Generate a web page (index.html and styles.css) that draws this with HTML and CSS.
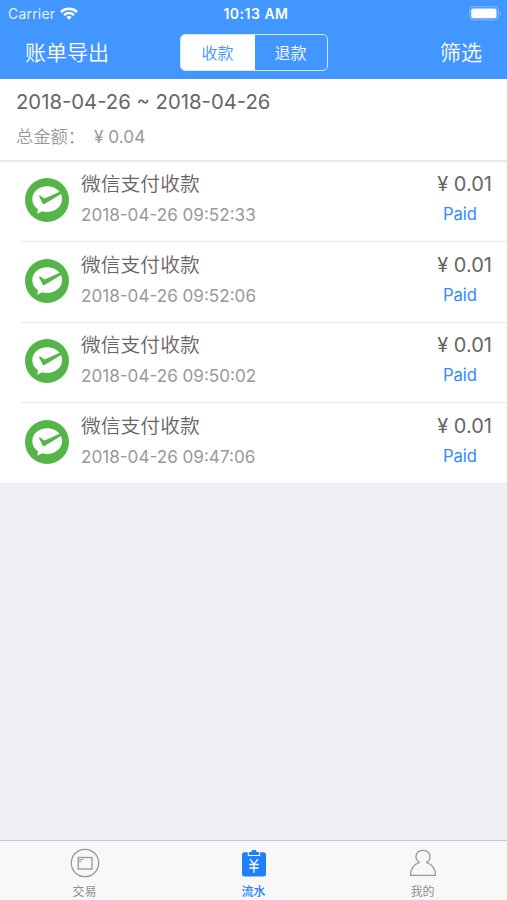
FILE: index.html
```html
<!DOCTYPE html>
<html lang="zh-CN">
<head>
    <meta charset="UTF-8">
    <meta name="viewport" content="width=device-width, initial-scale=1.0">
    <title>流水</title>
    <link rel="stylesheet" href="styles.css">
</head>
<body>
    <svg width="0" height="0" class="icon-defs">
        <!-- 微信支付图标 -->
        <symbol id="wechat-pay" viewBox="0 0 44 44">
            <circle cx="22" cy="22" r="22" fill="#55b548"/>
            <path d="M22 8.300C13.800 8.300 7.300 13.800 7.300 21.300C7.300 25.500 9.500 28.900 13 31.200L12.300 35.700L17.200 33.300C18.700 33.800 20.300 34 22 34C30.300 34 37 28.600 37 21.300C37 19.300 36.700 17.600 36 16L19.500 26C18.600 26.500 18 26.300 17.600 25.500L14.200 18.500C13.900 17.700 14.600 17.200 15.300 17.600L18.600 19.900C19.300 20.300 20 20.300 20.700 20L34.600 13.700C31.700 10.500 27.200 8.300 22 8.300Z" fill="#fff"/>
        </symbol>
    </svg>

    <header class="header">
        <div class="status-bar">
            <div class="carrier">
                <span>Carrier</span>
                <svg class="wifi" width="18" height="13" viewBox="0 0 18 13" fill="none" stroke="#fff" stroke-width="2.500">
                    <path d="M1 5C5.400 .8 12.600 .8 17 5"/>
                    <path d="M4 8.100C6.800 5.400 11.200 5.400 14 8.100"/>
                    <path d="M6.300 10C7.900 8.500 10.100 8.500 11.700 10L9 12.700Z" fill="#fff" stroke="none"/>
                </svg>
            </div>
            <span class="time">10:13 AM</span>
            <div class="battery-box">
                <svg width="33" height="15" viewBox="0 0 33 15">
                    <rect x=".7" y=".7" width="28.600" height="13.200" rx="3.500" fill="none" stroke="#84bbff" stroke-width="1"/>
                    <rect x="2.200" y="2.400" width="25.300" height="9.800" rx="2" fill="#fff"/>
                    <path d="M30.800 5.200Q33 7.200 30.800 9.300Z" fill="#84bbff"/>
                </svg>
            </div>
        </div>
        <nav class="nav-bar">
            <span class="nav-btn">账单导出</span>
            <div class="segment">
                <span class="segment-item active">收款</span>
                <span class="segment-item">退款</span>
            </div>
            <span class="nav-btn right">筛选</span>
        </nav>
    </header>

    <section class="summary">
        <div class="range">2018-04-26 ~ 2018-04-26</div>
        <div class="total"><span class="total-label">总金额：</span><span>¥ 0.04</span></div>
    </section>

    <main class="list">
        <div class="item">
            <svg class="item-icon"><use href="#wechat-pay"/></svg>
            <div class="item-body">
                <div class="item-title">微信支付收款</div>
                <div class="item-time">2018-04-26 09:52:33</div>
            </div>
            <div class="item-side">
                <div class="item-amount">¥ 0.01</div>
                <div class="item-status">Paid</div>
            </div>
        </div>
        <div class="item">
            <svg class="item-icon"><use href="#wechat-pay"/></svg>
            <div class="item-body">
                <div class="item-title">微信支付收款</div>
                <div class="item-time">2018-04-26 09:52:06</div>
            </div>
            <div class="item-side">
                <div class="item-amount">¥ 0.01</div>
                <div class="item-status">Paid</div>
            </div>
        </div>
        <div class="item">
            <svg class="item-icon"><use href="#wechat-pay"/></svg>
            <div class="item-body">
                <div class="item-title">微信支付收款</div>
                <div class="item-time">2018-04-26 09:50:02</div>
            </div>
            <div class="item-side">
                <div class="item-amount">¥ 0.01</div>
                <div class="item-status">Paid</div>
            </div>
        </div>
        <div class="item">
            <svg class="item-icon"><use href="#wechat-pay"/></svg>
            <div class="item-body">
                <div class="item-title">微信支付收款</div>
                <div class="item-time">2018-04-26 09:47:06</div>
            </div>
            <div class="item-side">
                <div class="item-amount">¥ 0.01</div>
                <div class="item-status">Paid</div>
            </div>
        </div>
    </main>

    <footer class="tab-bar">
        <div class="tab">
            <svg width="30" height="30" viewBox="0 0 30 30" fill="none" stroke="#999" stroke-width="1.300">
                <circle cx="15" cy="15" r="13.700"/>
                <rect x="8.200" y="9.500" width="13.800" height="11.500"/>
                <path d="M8.500 11.700H13.500M8.500 13.800H11.500" stroke-width="1"/>
            </svg>
            <span>交易</span>
        </div>
        <div class="tab active">
            <svg width="30" height="30" viewBox="0 0 30 30">
                <path d="M5.500 4.200H8.800V7.900H21.200V4.200H24.500Q27 4.200 27 6.700V26Q27 28.500 24.500 28.500H5.500Q3 28.500 3 26V6.700Q3 4.200 5.500 4.200Z" fill="#2080fc"/>
                <path d="M9.800 6.900V5Q9.800 4 10.800 4H12.200Q12.500 1.700 15 1.700T17.800 4H19.200Q20.200 4 20.200 5V6.900Z" fill="#2080fc"/>
                <path d="M11 11.200L15 16.200L19 11.200M15 16.200V24.800M10.300 16.500H19.700M10.300 20H19.700" fill="none" stroke="#fff" stroke-width="1.300"/>
            </svg>
            <span>流水</span>
        </div>
        <div class="tab">
            <svg width="30" height="30" viewBox="0 0 30 30" fill="none" stroke="#999" stroke-width="1.300" stroke-linejoin="round">
                <path d="M11.500 14.500C9.100 13 8 11 8 8.700C8 4.900 11 2.300 15 2.300S22 4.900 22 8.700C22 11 20.900 13 18.500 14.500C23.500 16 27.300 20.500 27.500 27.300H2.500C2.700 20.500 6.500 16 11.500 14.500Z"/>
            </svg>
            <span>我的</span>
        </div>
    </footer>
</body>
</html>
```
FILE: styles.css
```css
* {
    box-sizing: border-box;
}

body {
    margin: 0;
    height: 100vh;
    display: flex;
    flex-direction: column;
    overflow: hidden;
    background: #eeeef3;
    color: #666;
    font-family: Inter, "Noto Sans CJK SC", sans-serif;
}

.icon-defs {
    position: absolute;
}

/* 顶部 */
.header {
    height: 79px;
    background: #4296ff;
    color: #fff;
}

.status-bar {
    display: grid;
    grid-template-columns: 1fr auto 1fr;
    align-items: center;
    height: 27px;
    padding: 0 5px 0 10px;
    font-size: 14px;
}

.carrier {
    display: flex;
    align-items: center;
    gap: 5px;
    margin-left: -2px;
    color: #e6f1ff;
    letter-spacing: 0.2px;
}

.time {
    font-weight: 600;
    letter-spacing: 0.5px;
}

.battery-box {
    display: flex;
    justify-content: flex-end;
}

.nav-bar {
    display: grid;
    grid-template-columns: 1fr 148px 1fr;
    align-items: center;
    height: 50px;
    padding: 0 25px;
    font-size: 21px;
    font-weight: 350;
}

.nav-btn {
    margin-top: -2px;
}

.right {
    text-align: right;
}

.segment {
    display: flex;
    height: 37px;
    border: 1.500px solid #d5e7ff;
    border-radius: 5px;
    overflow: hidden;
    font-size: 16px;
}

.segment-item {
    flex: 1;
    line-height: 36px;
    text-align: center;
}

.segment-item.active {
    flex: 0 0 74px;
    background: #fff;
    color: #4296ff;
}

/* 汇总 */
.summary {
    height: 82.500px;
    padding: 8px 16px 0;
    background: #fff;
    border-bottom: 2px solid #e9e9eb;
}

.range {
    font-size: 20.300px;
    line-height: 30px;
}

.total {
    display: flex;
    margin-top: 5px;
    color: #999;
    font-size: 17.300px;
    line-height: 30px;
}

.total-label {
    width: 78px;
    font-weight: 350;
}

/* 流水列表 */
.list {
    background: #fff;
}

.item {
    display: flex;
    height: 80.500px;
    margin-left: 20px;
    padding: 7.500px 15px 0 5px;
    border-bottom: 1.500px solid #ececee;
}

.item:last-child {
    margin-left: 0;
    padding-left: 25px;
}

.item-icon {
    width: 44px;
    height: 44px;
    margin-top: 9px;
}

.item-body {
    flex: 1;
    margin-left: 12px;
}

.item-title {
    font-size: 19.800px;
    font-weight: 350;
    line-height: 31px;
}

.item-time {
    color: #999;
    font-size: 17.100px;
    line-height: 29px;
}

.item-side {
    text-align: right;
}

.item-amount {
    font-size: 20px;
    line-height: 31px;
}

.item-status {
    padding-right: 15px;
    color: #2c8cff;
    font-size: 16.600px;
    line-height: 29px;
}

/* 底部标签栏 */
.tab-bar {
    display: flex;
    height: 60px;
    margin-top: auto;
    background: #f8f8f9;
    border-top: 1px solid #c8c8cc;
}

.tab {
    flex: 1;
    display: flex;
    flex-direction: column;
    align-items: center;
    padding-top: 7px;
    color: #909090;
    font-size: 12px;
    line-height: 16px;
}

.tab span {
    margin-top: 6px;
}

.tab.active {
    color: #2080fc;
    font-weight: 500;
}
```
